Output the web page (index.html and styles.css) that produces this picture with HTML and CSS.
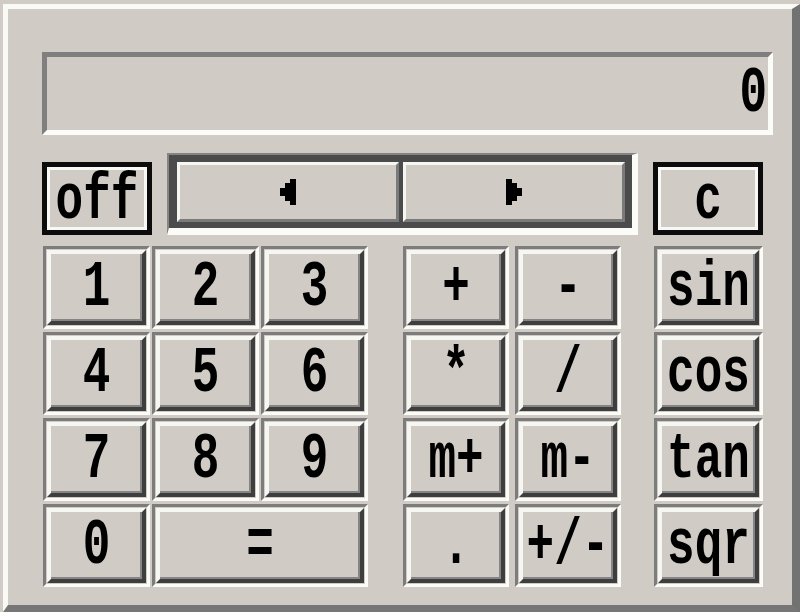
FILE: index.html
```html
<!DOCTYPE html>
<html lang="en">
<head>
    <meta charset="UTF-8">
    <title>Calculator</title>
    <link rel="stylesheet" href="styles.css">
</head>
<body>
    <div class="calc">
        <!-- display -->
        <div class="display"><span class="lbl" id="screen">0</span></div>

        <!-- off / cursor / clear -->
        <div class="top-row">
            <button class="framed"><span class="lbl">off</span></button>
            <div class="arrows">
                <button class="key">
                    <svg width="16" height="26" viewBox="0 0 16 26"><path d="M0 9h5v8H0zM5 4h5v18H5zM10 0h6v26h-6z"/></svg>
                </button>
                <button class="key">
                    <svg width="16" height="26" viewBox="0 0 16 26"><path d="M0 0h6v26H0zM6 4h5v18H6zM11 9h5v8h-5z"/></svg>
                </button>
            </div>
            <button class="framed"><span class="lbl">c</span></button>
        </div>

        <div class="keys">
            <div class="grid digits">
                <div class="well"><button class="key"><span class="lbl">1</span></button></div>
                <div class="well"><button class="key"><span class="lbl">2</span></button></div>
                <div class="well"><button class="key"><span class="lbl">3</span></button></div>
                <div class="well"><button class="key"><span class="lbl">4</span></button></div>
                <div class="well"><button class="key"><span class="lbl">5</span></button></div>
                <div class="well"><button class="key"><span class="lbl">6</span></button></div>
                <div class="well"><button class="key"><span class="lbl">7</span></button></div>
                <div class="well"><button class="key"><span class="lbl">8</span></button></div>
                <div class="well"><button class="key"><span class="lbl">9</span></button></div>
                <div class="well"><button class="key"><span class="lbl">0</span></button></div>
                <div class="well wide"><button class="key"><span class="lbl">=</span></button></div>
            </div>

            <div class="grid ops">
                <div class="well"><button class="key"><span class="lbl">+</span></button></div>
                <div class="well"><button class="key"><span class="lbl">-</span></button></div>
                <div class="well"><button class="key"><span class="lbl">*</span></button></div>
                <div class="well"><button class="key"><span class="lbl">/</span></button></div>
                <div class="well"><button class="key"><span class="lbl">m+</span></button></div>
                <div class="well"><button class="key"><span class="lbl">m-</span></button></div>
                <div class="well"><button class="key"><span class="lbl">.</span></button></div>
                <div class="well"><button class="key"><span class="lbl">+/-</span></button></div>
            </div>

            <div class="grid funcs">
                <div class="well"><button class="key"><span class="lbl">sin</span></button></div>
                <div class="well"><button class="key"><span class="lbl">cos</span></button></div>
                <div class="well"><button class="key"><span class="lbl">tan</span></button></div>
                <div class="well"><button class="key"><span class="lbl">sqr</span></button></div>
            </div>
        </div>
    </div>
</body>
</html>
```

FILE: styles.css
```css
body {
    margin: 0;
    background: #d0ccc5;
    font-family: "Liberation Mono", "DejaVu Sans Mono", monospace;
}

.calc {
    box-sizing: border-box;
    width: 797px;
    height: 608px;
    margin: 4px 0 0 3px;
    border-style: solid;
    border-width: 5px 8px 7px 5px;
    border-color: #f9f9f5 #727272 #767676 #f9f9f5;
    padding: 43px 0 0 34px;
}

.lbl {
    display: inline-block;
    transform: scaleY(1.4);
}

.display {
    box-sizing: border-box;
    width: 731px;
    height: 83px;
    border-style: solid;
    border-width: 5px;
    border-color: #7f7f7f #fbfbf8 #fbfbf8 #7f7f7f;
    display: flex;
    align-items: center;
    justify-content: flex-end;
    padding-right: 1px;
    font-size: 46px;
    font-weight: bold;
    color: #000;
}

button {
    margin: 0;
    padding: 0;
    font-family: inherit;
    font-size: 46px;
    font-weight: bold;
    line-height: 1;
    color: #000;
    background: #d0ccc5;
    cursor: pointer;
}

.top-row {
    display: flex;
    align-items: flex-start;
    gap: 15px;
    margin-top: 18px;
}

.framed {
    box-sizing: border-box;
    width: 110px;
    height: 73px;
    margin-top: 9px;
    padding-top: 4px;
    border: 5px solid #0c0c0c;
    box-shadow: inset 0 0 0 3px #f8f8f4;
}

.arrows {
    box-sizing: border-box;
    width: 471px;
    height: 82px;
    display: flex;
    gap: 4px;
    padding: 7px 7px 6px 8px;
    border-style: solid;
    border-width: 2px 6px 7px 2px;
    border-color: #858585 #fbfbf8 #fbfbf8 #858585;
    background: #4b4b4b;
}

.arrows .key {
    border-width: 3px;
    border-color: #f6f6f2 #7a7a7a #7a7a7a #f6f6f2;
    box-shadow: none;
}

.keys {
    display: flex;
    align-items: flex-start;
    margin-top: 11px;
}

.grid {
    display: grid;
    grid-auto-rows: 83px;
    gap: 3px 2px;
}

.digits {
    grid-template-columns: repeat(3, 107px);
    margin-left: 1px;
}

.ops {
    grid-template-columns: repeat(2, 106px);
    column-gap: 6px;
    margin-left: 35px;
}

.funcs {
    grid-template-columns: 109px;
    margin-left: 33px;
}

.well {
    box-sizing: border-box;
    display: flex;
    padding: 1px;
    border-style: solid;
    border-width: 3px;
    border-color: #7c7c7c #fbfbf8 #fbfbf8 #7c7c7c;
}

.well.wide { grid-column: span 2; }

.key {
    flex: 1;
    box-sizing: border-box;
    display: flex;
    align-items: center;
    justify-content: center;
    border-style: solid;
    border-width: 4px;
    border-color: #f6f6f2 #3e3e3e #3e3e3e #f6f6f2;
    box-shadow: inset -2px -2px 0 #858585;
}
```
